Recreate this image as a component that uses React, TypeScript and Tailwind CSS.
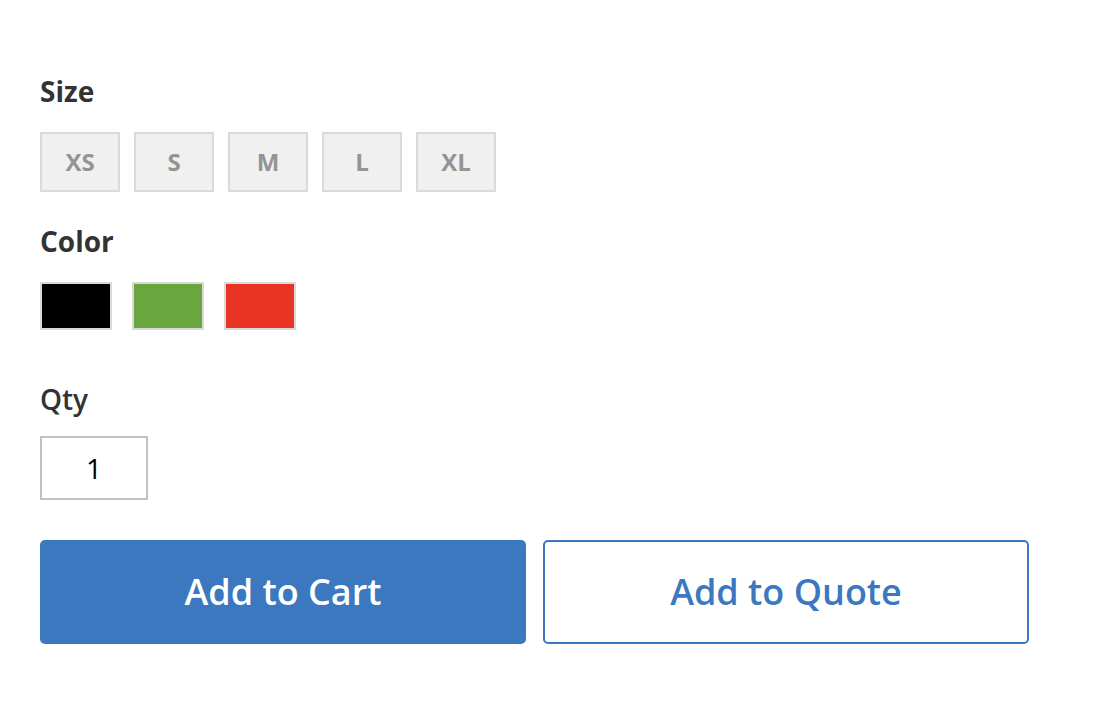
import React from "react";

const sizes = ["XS", "S", "M", "L", "XL"];
const colors = ["#000000", "#69a63e", "#e93323"];

export default function App() {
  return (
    <div
      className="w-[1116px] h-[722px] bg-white text-[#333333] pl-[40px] pt-[74px]"
      style={{ fontFamily: '"Open Sans", "Liberation Sans", sans-serif' }}
    >
      <div className="text-[28px] leading-[34px] font-bold">Size</div>
      <div className="flex gap-[14px] mt-[24px]">
        {sizes.map((s) => (
          <div
            key={s}
            className="w-[80px] h-[60px] border-2 border-[#dadada] bg-[#f0f0f0] flex items-center justify-center text-[24px] font-bold text-[#949494]"
          >
            {s}
          </div>
        ))}
      </div>
      <div className="text-[28px] leading-[34px] font-bold mt-[32px]">Color</div>
      <div className="flex gap-[20px] mt-[24px]">
        {colors.map((c) => (
          <div
            key={c}
            className="w-[72px] h-[48px] border-2 border-[#dadada]"
            style={{ backgroundColor: c }}
          />
        ))}
      </div>
      <div className="text-[28px] leading-[34px] font-semibold mt-[52px]">Qty</div>
      <div className="mt-[20px] w-[108px] h-[64px] border-2 border-[#c2c2c2] flex items-center justify-center text-[28px] text-black">
        1
      </div>
      <div className="flex gap-[17px] mt-[40px]">
        <button className="w-[486px] h-[104px] rounded-[5px] bg-[#3b78bf] text-white text-[36px] font-semibold flex items-center justify-center">
          Add to Cart
        </button>
        <button className="w-[486px] h-[104px] rounded-[5px] border-2 border-[#3b78bf] bg-white text-[#3b78bf] text-[36px] font-semibold flex items-center justify-center">
          Add to Quote
        </button>
      </div>
    </div>
  );
}
